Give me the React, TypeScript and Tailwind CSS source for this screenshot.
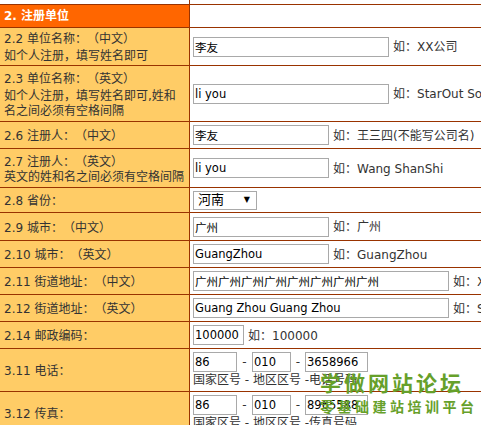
import React from "react";

const B = "border-[#993300]";

function T({ s }: { s: string }) {
  const parts = s.split(/([\uFF00-\uFFEF\u3000-\u303F]+)/);
  return (
    <>
      {parts.map((p, i) =>
        /^[\uFF00-\uFFEF\u3000-\u303F]+$/.test(p) ? (
          <span key={i} style={{ fontFamily: '"Noto Sans CJK SC", sans-serif' }}>
            {p}
          </span>
        ) : (
          <React.Fragment key={i}>{p}</React.Fragment>
        )
      )}
    </>
  );
}

function Row({
  h,
  lines,
  right,
  leftClass = "bg-[#ffcc66]",
  head,
}: {
  h: string;
  lines?: string[];
  right?: React.ReactNode;
  leftClass?: string;
  head?: React.ReactNode;
}) {
  return (
    <div className={`flex border-b ${B} ${h}`}>
      <div
        className={`w-[190px] shrink-0 border-r ${B} ${leftClass} pl-[4px] flex items-center text-[#333] leading-[15px] whitespace-nowrap`}
      >
        <div className="pt-[1px]">
          {head}
          {lines?.map((l, i) => (
            <div key={i}>
              <T s={l} />
            </div>
          ))}
        </div>
      </div>
      <div className="flex-1 pl-[3px] flex items-center whitespace-nowrap text-[#333]">
        {right}
      </div>
    </div>
  );
}

function Inp({ w, v }: { w: string; v: string }) {
  return (
    <input
      readOnly
      value={v}
      className={`${w} h-[20px] border border-[#a9a9a9] bg-white px-[1px] text-[11.5px] text-black outline-none`}
    />
  );
}

function Hint({ t }: { t: string }) {
  return (
    <span className="ml-[4px]">
      <T s={t} />
    </span>
  );
}

function Phone({ a, b, c, note }: { a: string; b: string; c: string; note: string }) {
  return (
    <div className="flex flex-col">
      <div className="flex items-center">
        <Inp w="w-[44px]" v={a} />
        <span className="w-[15px] text-center">-</span>
        <Inp w="w-[39px]" v={b} />
        <span className="w-[14px] text-center">-</span>
        <Inp w="w-[63px]" v={c} />
      </div>
      <div className="leading-[16px]">{note}</div>
    </div>
  );
}

export default function App() {
  return (
    <div
      className="relative w-[481px] h-[425px] overflow-hidden bg-white text-[12px] [text-spacing-trim:space-all]"
      style={{ fontFamily: '"DejaVu Sans", "Noto Sans CJK SC", sans-serif' }}
    >
      <div className="w-[640px]">
        <Row h="h-[5px]" leftClass="bg-white" />
        <Row
          h="h-[23px]"
          leftClass="bg-[#ff6600]"
          head={<span className="text-white font-bold">2. 注册单位</span>}
        />
        <Row
          h="h-[38px]"
          lines={["2.2 单位名称：（中文）", "如个人注册，填写姓名即可"]}
          right={
            <>
              <Inp w="w-[196px]" v="李友" />
              <Hint t="如：XX公司" />
            </>
          }
        />
        <Row
          h="h-[56px]"
          lines={["2.3 单位名称：（英文）", "如个人注册，填写姓名即可,姓和", "名之间必须有空格间隔"]}
          right={
            <>
              <Inp w="w-[196px]" v="li you" />
              <Hint t="如：StarOut Software" />
            </>
          }
        />
        <Row
          h="h-[27px]"
          lines={["2.6 注册人：（中文）"]}
          right={
            <>
              <Inp w="w-[136px]" v="李友" />
              <Hint t="如：王三四(不能写公司名)" />
            </>
          }
        />
        <Row
          h="h-[39px]"
          lines={["2.7 注册人：（英文）", "英文的姓和名之间必须有空格间隔"]}
          right={
            <>
              <Inp w="w-[136px]" v="li you" />
              <Hint t="如：Wang ShanShi" />
            </>
          }
        />
        <Row
          h="h-[25px]"
          lines={["2.8 省份："]}
          right={
            <div className="w-[64px] h-[19px] border border-[#a9a9a9] bg-white flex items-center justify-between pl-[4px] pr-[6px] text-[13px] text-black">
              <span>河南</span>
              <span className="text-[8px]">▼</span>
            </div>
          }
        />
        <Row
          h="h-[28px]"
          lines={["2.9 城市：（中文）"]}
          right={
            <>
              <Inp w="w-[136px]" v="广州" />
              <Hint t="如：广州" />
            </>
          }
        />
        <Row
          h="h-[27px]"
          lines={["2.10 城市：（英文）"]}
          right={
            <>
              <Inp w="w-[136px]" v="GuangZhou" />
              <Hint t="如：GuangZhou" />
            </>
          }
        />
        <Row
          h="h-[27px]"
          lines={["2.11 街道地址：（中文）"]}
          right={
            <>
              <Inp w="w-[256px]" v="广州广州广州广州广州广州广州广州" />
              <Hint t="如：XX路XX号" />
            </>
          }
        />
        <Row
          h="h-[27px]"
          lines={["2.12 街道地址：（英文）"]}
          right={
            <>
              <Inp w="w-[256px]" v="Guang Zhou Guang Zhou" />
              <Hint t="如：Street" />
            </>
          }
        />
        <Row
          h="h-[27px]"
          lines={["2.14 邮政编码："]}
          right={
            <>
              <Inp w="w-[51px]" v="100000" />
              <Hint t="如：100000" />
            </>
          }
        />
        <Row
          h="h-[43px]"
          lines={["3.11 电话："]}
          right={<Phone a="86" b="010" c="3658966" note="国家区号 - 地区区号 -电话号码" />}
        />
        <Row
          h="h-[43px]"
          lines={["3.12 传真："]}
          right={<Phone a="86" b="010" c="8965588" note="国家区号 - 地区区号 -传真号码" />}
        />
      </div>
      <div className="absolute left-[320px] top-[372px] text-[#66a02a] font-bold pointer-events-none">
        <div className="text-[21px] leading-[24px] tracking-[3px]">学做网站论坛</div>
        <div className="text-[14px] leading-[18px] tracking-[3.5px] mt-[2px]">零基础建站培训平台</div>
      </div>
    </div>
  );
}
